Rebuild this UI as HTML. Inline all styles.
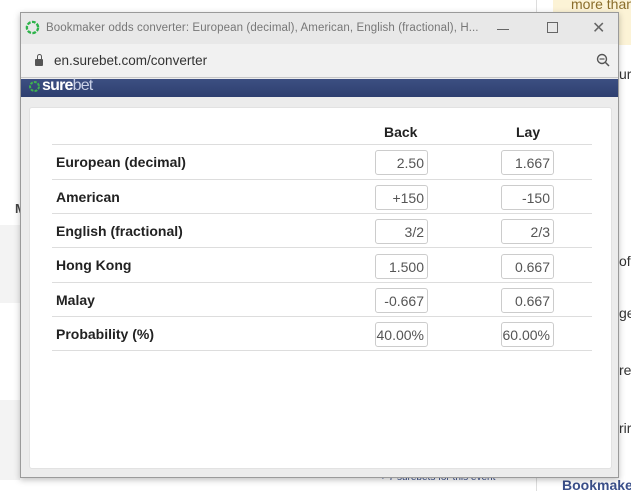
<!DOCTYPE html>
<html><head><style>
*{margin:0;padding:0;box-sizing:border-box}
body{width:631px;height:491px;position:relative;overflow:hidden;background:#fff;font-family:"Liberation Sans",Arial,sans-serif}
.abs{position:absolute;white-space:nowrap}
.win{left:20px;top:12px;width:599px;height:466px;background:#ececec;border:1px solid #9a9a9a;box-shadow:0 2px 6px rgba(0,0,0,.25)}
.title{left:0;top:0;width:597px;height:31px;background:#e8e8e8;font-size:11.5px;color:#777;}
.addr{left:0;top:31px;width:597px;height:34px;background:#f1f1f1;border-bottom:1px solid #c8c8c8;font-size:13.5px;color:#333}
.blue{left:0;top:66px;width:597px;height:18px;background:linear-gradient(#3c4f82,#2e3f70)}
.card{left:8px;top:94px;width:583px;height:362px;background:#fff;border-radius:3px;border:1px solid #e2e2e2}
.row{position:absolute;left:22px;width:540px;border-top:1px solid #ddd;height:35px;font-weight:bold;font-size:14px;color:#222}
.row span.l{position:absolute;left:4px;top:9px}
.inp{position:absolute;width:53px;height:25px;border:1px solid #ccc;border-radius:3px;font-size:14px;color:#555;text-align:right;padding:4px 3px 0 0;font-weight:normal}
</style></head><body>
<div class="abs" style="left:0;top:225px;width:20px;height:78px;background:#f3f3f3"></div>
<div class="abs" style="left:0;top:400px;width:20px;height:80px;background:#f3f3f3"></div>
<div class="abs" style="left:15px;top:201px;font-size:13px;color:#444;font-weight:bold">M</div>
<div class="abs" style="left:536px;top:0;width:1px;height:491px;background:#ddd"></div>
<div class="abs" style="left:553px;top:0;width:78px;height:45px;background:#fcf3d6"></div>
<div class="abs" style="left:571px;top:-4px;font-size:14px;color:#8a6d2b">more than</div>
<div class="abs" style="left:619px;top:66px;font-size:14px;color:#333">ur</div>
<div class="abs" style="left:619px;top:253px;font-size:14px;color:#333">of</div>
<div class="abs" style="left:619px;top:305px;font-size:14px;color:#333">ge</div>
<div class="abs" style="left:619px;top:362px;font-size:14px;color:#333">re</div>
<div class="abs" style="left:619px;top:420px;font-size:14px;color:#333">rir</div>
<div class="abs" style="left:562px;top:477px;font-size:14px;color:#3a4f8a;font-weight:bold">Bookmaker</div>
<div class="abs" style="left:380px;top:472px;font-size:10px;color:#3a4f8a">+ 7 surebets for this event</div>

<div class="abs win">
 <div class="abs title">
  <svg class="abs" style="left:4px;top:7px" width="15" height="15" viewBox="0 0 16 16"><circle cx="8" cy="8" r="6" fill="none" stroke="#2db34a" stroke-width="2.5" stroke-dasharray="4 1.5"/></svg>
  <div class="abs" style="left:25px;top:9px;letter-spacing:0.1px">Bookmaker odds converter: European (decimal), American, English (fractional), H...</div>
  <div class="abs" style="left:476px;top:16px;width:12px;height:1px;background:#666"></div>
  <div class="abs" style="left:526px;top:9px;width:11px;height:11px;border:1px solid #666"></div>
  <div class="abs" style="left:571px;top:5px;font-size:16px;color:#666">✕</div>
 </div>
 <div class="abs addr">
  <div class="abs" style="left:14px;top:15px;width:8px;height:7px;background:#555;border-radius:1px"></div>
  <div class="abs" style="left:15.5px;top:10px;width:5px;height:7px;border:1.5px solid #555;border-radius:3px 3px 0 0"></div>
  <div class="abs" style="left:33px;top:9px">en.surebet.com/converter</div>
  <svg class="abs" style="left:575px;top:9px" width="15" height="15" viewBox="0 0 15 15"><circle cx="6" cy="6" r="4.5" fill="none" stroke="#555" stroke-width="1.4"/><line x1="9.5" y1="9.5" x2="13" y2="13" stroke="#555" stroke-width="1.5"/><line x1="3.5" y1="6" x2="8.5" y2="6" stroke="#555" stroke-width="1.2"/></svg>
 </div>
 <div class="abs blue">
  <svg class="abs" style="left:7px;top:1px" width="13" height="13" viewBox="0 0 16 16"><circle cx="8" cy="8" r="5.5" fill="none" stroke="#3fb24f" stroke-width="2.5" stroke-dasharray="3.5 1.5"/></svg>
  <div class="abs" style="left:21px;top:-1px;font-size:16px;line-height:16px;letter-spacing:-0.8px;color:#fff;font-weight:bold">sure<span style="font-weight:normal;color:#c8d0e6">bet</span></div>
 </div>
 <div class="abs card">
  <div class="abs" style="left:354px;top:16px;font-size:14px;font-weight:bold;color:#222">Back</div>
  <div class="abs" style="left:486px;top:16px;font-size:14px;font-weight:bold;color:#222">Lay</div>
  <div class="row" style="top:36px"><span class="l">European (decimal)</span><div class="inp" style="left:323px;top:5px">2.50</div><div class="inp" style="left:449px;top:5px">1.667</div></div>
  <div class="row" style="top:71px"><span class="l">American</span><div class="inp" style="left:323px;top:5px">+150</div><div class="inp" style="left:449px;top:5px">-150</div></div>
  <div class="row" style="top:105px"><span class="l">English (fractional)</span><div class="inp" style="left:323px;top:5px">3/2</div><div class="inp" style="left:449px;top:5px">2/3</div></div>
  <div class="row" style="top:139px"><span class="l">Hong Kong</span><div class="inp" style="left:323px;top:6px">1.500</div><div class="inp" style="left:449px;top:6px">0.667</div></div>
  <div class="row" style="top:174px"><span class="l">Malay</span><div class="inp" style="left:323px;top:5px">-0.667</div><div class="inp" style="left:449px;top:5px">0.667</div></div>
  <div class="row" style="top:208px;border-bottom:1px solid #ddd"><span class="l">Probability (%)</span><div class="inp" style="left:323px;top:5px">40.00%</div><div class="inp" style="left:449px;top:5px">60.00%</div></div>
 </div>
</div>
</body></html>
